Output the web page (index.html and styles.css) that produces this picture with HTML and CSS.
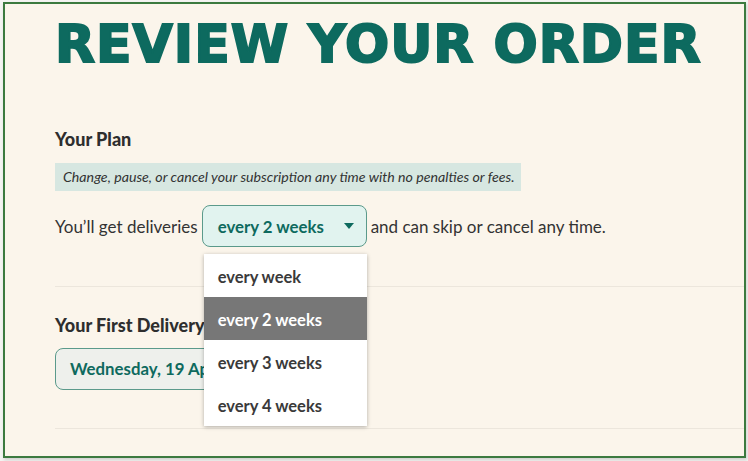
FILE: index.html
```html
<!DOCTYPE html>
<html>
<head>
<meta charset="utf-8">
<link rel="stylesheet" href="styles.css">
</head>
<body>
<div class="frame">
  <h1 class="title">REVIEW YOUR ORDER</h1>
  <section class="plan">
    <h2 class="heading">Your Plan</h2>
    <p class="banner">Change, pause, or cancel your subscription any time with no penalties or fees.</p>
    <div class="line">
      <span>You’ll get deliveries</span>
      <div class="select-wrap">
        <div class="select">
          <span class="select-value">every 2 weeks</span>
          <svg class="caret" width="12" height="8" viewBox="0 0 12 8"><path d="M1 1 L11 1 L6 7 Z" fill="#0e6a5e"/></svg>
        </div>
        <ul class="menu">
          <li class="opt">every week</li>
          <li class="opt active">every 2 weeks</li>
          <li class="opt">every 3 weeks</li>
          <li class="opt">every 4 weeks</li>
        </ul>
      </div>
      <span>and can skip or cancel any time.</span>
    </div>
  </section>
  <hr class="divider">
  <section class="delivery">
    <h2 class="heading">Your First Delivery</h2>
    <div class="datebox">Wednesday, 19 April</div>
  </section>
  <hr class="divider last">
</div>
</body>
</html>
```

FILE: styles.css
```css
html, body {
  margin: 0;
  padding: 0;
  background: #f4f4f2;
}
body {
  font-family: "Lato", "Liberation Sans", sans-serif;
  color: #333333;
  width: 748px;
  height: 461px;
  overflow: hidden;
}
.frame {
  margin: 2px 0 0 3px;
  width: 743px;
  height: 456px;
  border: 2px solid #3c7a3f;
  background: #fbf5eb;
  padding-left: 50px;
  box-sizing: border-box;
  overflow: hidden;
  box-shadow: 1px 2px 3px rgba(0,0,0,0.15);
}
.title {
  margin: 12px 0 0 0;
  font-family: "DejaVu Sans", sans-serif;
  font-weight: 900;
  font-size: 52px;
  line-height: 56px;
  color: #0d6a5f;
  letter-spacing: 1px;
  -webkit-text-stroke: 2px #0d6a5f;
}
.plan {
  padding-top: 56px;
}
.heading {
  margin: 0;
  font-size: 18px;
  font-weight: 900;
  line-height: 22px;
  color: #2e2e2e;
}
.banner {
  margin: 13px 0 0 0;
  display: inline-block;
  background: #d7e7e1;
  font-style: italic;
  font-size: 14.2px;
  line-height: 28px;
  padding: 0 6px 0 8px;
  color: #333;
}
.line {
  margin-top: 14px;
  display: flex;
  align-items: center;
  gap: 4px;
  font-size: 17px;
}
.select-wrap {
  position: relative;
}
.select {
  box-sizing: border-box;
  width: 165px;
  height: 42px;
  border: 1px solid #5b9a8b;
  border-radius: 8px;
  background: #e1f3ef;
  display: flex;
  align-items: center;
  justify-content: space-between;
  padding: 0 11px 0 15px;
  color: #0e6a5e;
  font-weight: 700;
  font-size: 16.8px;
}
.menu {
  position: absolute;
  left: 2px;
  top: 49px;
  width: 163px;
  margin: 0;
  padding: 0;
  list-style: none;
  background: #ffffff;
  box-shadow: 0 1px 4px rgba(0,0,0,0.3);
  z-index: 2;
}
.opt {
  height: 43px;
  line-height: 46px;
  padding-left: 14px;
  font-size: 16.5px;
  font-weight: 700;
  color: #3a3a3a;
}
.opt.active {
  background: #777777;
  color: #ffffff;
}
.divider {
  margin: 39px 0 0 0;
  border: 0;
  border-top: 1px solid #ece6dc;
  height: 0;
}
.divider.last {
  margin-top: 38px;
}
.delivery {
  padding-top: 27px;
}
.datebox {
  margin-top: 12px;
  box-sizing: border-box;
  width: 200px;
  height: 42px;
  border: 1px solid #5b9a8b;
  border-radius: 8px;
  background: #eef0ec;
  color: #0e6a5e;
  font-weight: 700;
  font-size: 16.8px;
  line-height: 40px;
  padding-left: 14px;
  white-space: nowrap;
  overflow: hidden;
}
```
